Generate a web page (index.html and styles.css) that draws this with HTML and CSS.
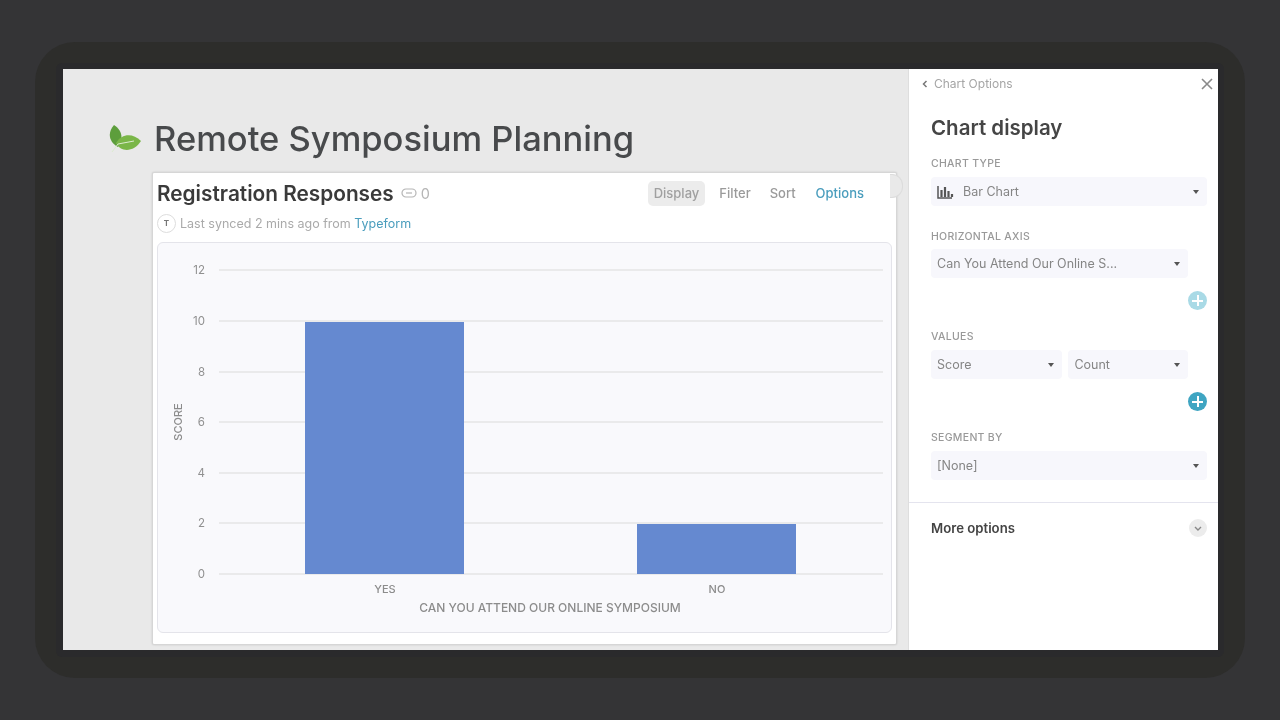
FILE: index.html
```html
<!DOCTYPE html>
<html lang="en">
<head>
<meta charset="UTF-8">
<meta name="viewport" content="width=device-width, initial-scale=1.0">
<title>Remote Symposium Planning</title>
<link rel="stylesheet" href="styles.css">
</head>
<body>

<div class="bezel">
    <div class="screen">
        <main class="doc">
            <div class="doc-title">
                <svg class="leaf" width="34" height="30" viewBox="0 0 34 30">
                    <path d="M10 23 C1 18 -1 9 6 1 C14 6 16 15 10 23Z" fill="#5d9e3c"/>
                    <path d="M8 19 C14 9 25 9 33 17 C26 28 13 29 8 19Z" fill="#7ab648"/>
                    <path d="M4 28 L10 20 M10 20 L26 17" stroke="#dcebcf" stroke-width="1" fill="none"/>
                </svg>
                <h1>Remote Symposium Planning</h1>
            </div>

            <section class="card">
                <span class="card-handle"></span>
                <div class="card-head">
                    <h2>Registration Responses</h2>
                    <span class="links">
                        <svg width="16" height="10" viewBox="0 0 16 10">
                            <rect x="1" y="1" width="14" height="8" rx="4" fill="none" stroke="#b5b5b5" stroke-width="1.2"/>
                            <path d="M5 5H11" stroke="#b5b5b5" stroke-width="1.2"/>
                        </svg>
                        0
                    </span>
                    <nav class="tabs">
                        <span class="tab tab-on">Display</span>
                        <span class="tab">Filter</span>
                        <span class="tab">Sort</span>
                        <span class="tab tab-link">Options</span>
                    </nav>
                </div>
                <div class="sync">
                    <span class="sync-badge">T</span>
                    <span>Last synced 2 mins ago from <a class="sync-src">Typeform</a></span>
                </div>
                <div class="chart">
                    <svg width="733" height="389" viewBox="0 0 733 389">
                        <g class="grid">
                            <path d="M61 27H725"/>
                            <path d="M61 78H725"/>
                            <path d="M61 129H725"/>
                            <path d="M61 179H725"/>
                            <path d="M61 230H725"/>
                            <path d="M61 280H725"/>
                            <path d="M61 331H725"/>
                        </g>
                        <g class="ticks">
                            <text x="47" y="31">12</text>
                            <text x="47" y="82">10</text>
                            <text x="47" y="133">8</text>
                            <text x="47" y="183">6</text>
                            <text x="47" y="234">4</text>
                            <text x="47" y="284">2</text>
                            <text x="47" y="335">0</text>
                        </g>
                        <rect class="bar" x="147" y="79" width="159" height="252"/>
                        <rect class="bar" x="479" y="281" width="159" height="50"/>
                        <g class="axis">
                            <text x="227" y="350">YES</text>
                            <text x="559" y="350">NO</text>
                            <text class="axis-title" x="392" y="369">CAN YOU ATTEND OUR ONLINE SYMPOSIUM</text>
                            <text transform="translate(24 179) rotate(-90)">SCORE</text>
                        </g>
                    </svg>
                </div>
            </section>
        </main>

        <aside class="panel">
            <div class="crumb">
                <svg width="6" height="8" viewBox="0 0 6 8"><path d="M4.5 1L1.5 4L4.5 7" fill="none" stroke="#777" stroke-width="1.5"/></svg>
                <span>Chart Options</span>
                <svg class="close" width="12" height="12" viewBox="0 0 12 12"><path d="M1 1L11 11M11 1L1 11" stroke="#8a8a8a" stroke-width="1.6"/></svg>
            </div>
            <div class="panel-body">
                <h3>Chart display</h3>

                <div class="label label-first">CHART TYPE</div>
                <div class="select">
                    <svg class="bar-icon" width="17" height="14" viewBox="0 0 17 14">
                        <path d="M1 1V13H15" fill="none" stroke="#555" stroke-width="1.5"/>
                        <path d="M4.5 5V12M8 2V12M11.5 6V12M15 9V12" stroke="#555" stroke-width="2.2"/>
                    </svg>
                    <span>Bar Chart</span>
                </div>

                <div class="label label-gap">HORIZONTAL AXIS</div>
                <div class="select select-short">Can You Attend Our Online S...</div>
                <div class="plus-row"><span class="plus plus-off"></span></div>

                <div class="label label-after-plus">VALUES</div>
                <div class="select-pair">
                    <div class="select">Score</div>
                    <div class="select">Count</div>
                </div>
                <div class="plus-row plus-row-values"><span class="plus"></span></div>

                <div class="label label-after-plus">SEGMENT BY</div>
                <div class="select">[None]</div>
            </div>
            <div class="more">
                <span>More options</span>
                <span class="more-btn">
                    <svg width="8" height="5" viewBox="0 0 8 5"><path d="M1 1L4 4L7 1" fill="none" stroke="#888" stroke-width="1.4"/></svg>
                </span>
            </div>
        </aside>
    </div>
</div>

</body>
</html>
```

FILE: styles.css
```css
html, body {
    margin: 0;
    height: 100%;
}
body {
    background-color: #343436;
    font-family: 'Inter', 'Liberation Sans', sans-serif;
    color: #444;
    padding: 42px 35px;
    box-sizing: border-box;
    height: 720px;
    overflow: hidden;
}
.bezel {
    background-color: #2d2d2b;
    border-radius: 40px;
    height: 636px;
    padding: 21px 21px;
    box-sizing: border-box;
}
.screen {
    display: flex;
    height: 594px;
    padding: 6px 6px 7px 7px;
    box-sizing: border-box;
    background-color: #2a2a2c;
    border-radius: 6px;
    filter: blur(0.45px);
}

/* left document */
.doc {
    width: 845px;
    flex: none;
    background-color: #e9e9e9;
    overflow: hidden;
    box-sizing: border-box;
    padding: 48px 11px 0 89px;
}
.doc-title {
    display: flex;
    align-items: center;
    gap: 12px;
    margin-left: -44px;
    margin-bottom: 11px;
}
.leaf { flex: none; }
h1 {
    margin: 0;
    font-size: 34.5px;
    line-height: 44px;
    font-weight: 500;
    color: #484a4c;
    white-space: nowrap;
}
.card {
    position: relative;
    background: #fff;
    border: 1px solid #d6d6d6;
    border-radius: 2px;
    box-shadow: 0 0 2px rgba(0, 0, 0, 0.15);
    padding: 0 4px 11px;
    height: 473px;
    box-sizing: border-box;
}
.card-handle {
    position: absolute;
    right: -7px;
    top: 1px;
    width: 12px;
    height: 22px;
    border: 1px solid #dcdcdc;
    border-left: none;
    border-radius: 0 11px 11px 0;
    background: #e9e9e9;
}
.card-head {
    display: flex;
    align-items: center;
    height: 40px;
}
h2 {
    margin: 0;
    font-size: 20.8px;
    font-weight: 600;
    color: #3a3a3a;
    white-space: nowrap;
}
.links {
    display: flex;
    align-items: center;
    gap: 4px;
    margin-left: 7px;
    font-size: 14.5px;
    color: #b5b5b5;
}
.tabs {
    display: flex;
    align-items: center;
    margin-left: auto;
    margin-right: 24px;
    gap: 1px;
    font-size: 13px;
    font-weight: 500;
    color: #9a9a9a;
}
.tab {
    padding: 0 5px;
    height: 25px;
    line-height: 25px;
    border-radius: 5px;
    margin-left: 8px;
}
.tab-on { background: #ececec; padding: 0 6px; color: #a0a0a0; }
.tab-link { color: #4a9dbd; margin-left: 9px; margin-right: -1px; }
.sync {
    display: flex;
    align-items: center;
    gap: 4px;
    height: 22px;
    margin-top: -1px;
    font-size: 12.5px;
    color: #aaa;
}
.sync-badge {
    width: 17px;
    height: 17px;
    border: 1px solid #ddd;
    border-radius: 50%;
    font-size: 8px;
    font-weight: 700;
    color: #777;
    display: flex;
    align-items: center;
    justify-content: center;
    flex: none;
}
.sync-src { color: #4a9dbd; }
.chart {
    margin-top: 8px;
    height: 391px;
    background: #f9f9fc;
    border: 1px solid #e4e4ea;
    border-radius: 6px;
    box-sizing: border-box;
}
.chart svg { display: block; }
.grid path { stroke: #e4e4e6; stroke-width: 1.3; }
.ticks text {
    font-size: 11.5px;
    fill: #909090;
    text-anchor: end;
}
.bar { fill: #6589d0; }
.axis text {
    font-size: 11px;
    fill: #8c8c8c;
    font-weight: 500;
    text-anchor: middle;
}
.axis .axis-title { font-size: 12px; }

/* right panel */
.panel {
    flex: 1;
    background: #fff;
    border-left: 1px solid #dedede;
    display: flex;
    flex-direction: column;
    min-width: 0;
}
.crumb {
    display: flex;
    align-items: center;
    gap: 6px;
    height: 29px;
    padding: 0 5px 0 13px;
    font-size: 12px;
    color: #a5a5a5;
}
.close { margin-left: auto; }
.panel-body {
    padding: 15px 11px 0 22px;
}
h3 {
    margin: 0;
    font-size: 20.5px;
    line-height: 30px;
    font-weight: 600;
    color: #454545;
}
.label {
    font-size: 10.5px;
    line-height: 14px;
    font-weight: 500;
    letter-spacing: 0.3px;
    color: #999;
}
.label-first { margin-top: 14px; margin-bottom: 6px; }
.label-gap { margin-top: 24px; margin-bottom: 5px; }
.label-after-plus { margin-top: 20px; margin-bottom: 6px; }
.select {
    position: relative;
    display: flex;
    align-items: center;
    gap: 9px;
    height: 29px;
    padding: 0 6px;
    background: #f7f7fc;
    border-radius: 4px;
    font-size: 12.5px;
    color: #858585;
}
.select::after {
    content: "";
    position: absolute;
    right: 8px;
    top: 13px;
    border-left: 3.5px solid transparent;
    border-right: 3.5px solid transparent;
    border-top: 4px solid #555;
}
.select-short { margin-right: 19px; }
.select-pair {
    display: flex;
    gap: 6px;
    margin-right: 19px;
}
.select-pair .select:first-child { flex: 1 1 132px; }
.select-pair .select:last-child { flex: 1 1 119px; }
.bar-icon { flex: none; }
.plus-row {
    display: flex;
    justify-content: flex-end;
    margin-top: 13px;
}
.plus {
    position: relative;
    width: 19px;
    height: 19px;
    border-radius: 50%;
    background: #3fa5c2;
}
.plus-off { background: #a9dae6; }
.plus::before, .plus::after {
    content: "";
    position: absolute;
    background: #fff;
    left: 4px;
    right: 4px;
    top: 8.5px;
    height: 2px;
}
.plus::after {
    left: 8.5px;
    right: auto;
    width: 2px;
    top: 4px;
    height: 11px;
}
.more {
    display: flex;
    align-items: center;
    justify-content: space-between;
    margin-top: 22px;
    padding: 16px 11px 0 22px;
    border-top: 1px solid #e4e4ee;
    font-size: 13.2px;
    font-weight: 600;
    color: #444;
}
.more-btn {
    width: 18px;
    height: 18px;
    border-radius: 50%;
    background: #ececec;
    display: flex;
    align-items: center;
    justify-content: center;
}
```
